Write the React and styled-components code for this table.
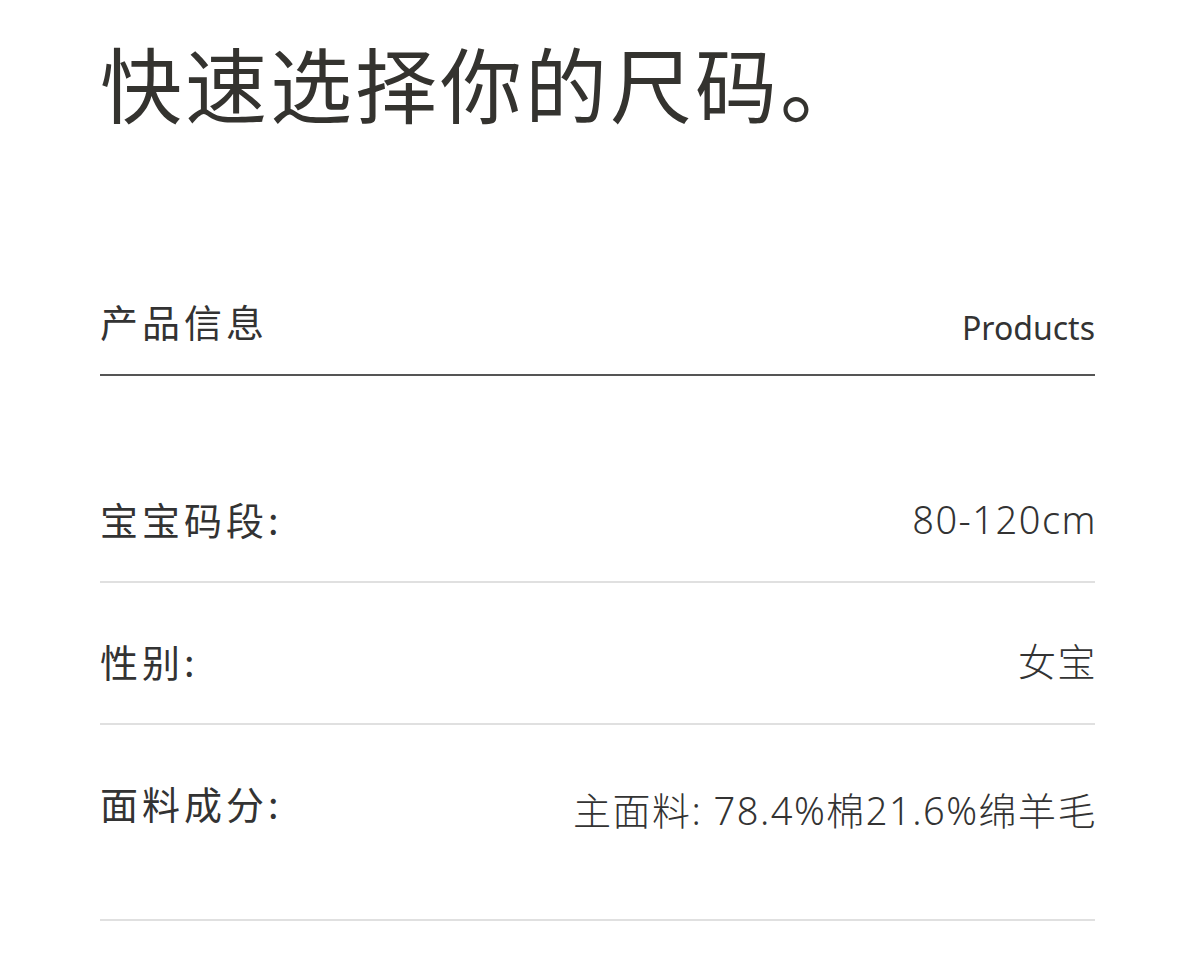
import React from 'react'
import styled, { createGlobalStyle } from 'styled-components'

const GlobalStyle = createGlobalStyle`
  body {
    margin: 0;
    background: #fff;
    font-family: "Noto Sans", "Noto Sans CJK SC", sans-serif;
    color: #333;
  }
`

const Page = styled.div`
  width: 995px;
  padding: 41px 0 0 100px;
`

const Title = styled.h1`
  margin: 0;
  font-family: "Noto Sans CJK SC", sans-serif;
  font-size: 82px;
  line-height: 1;
  font-weight: 400;
  letter-spacing: 3px;
  color: #34332f;
  white-space: nowrap;
`

const Header = styled.div`
  display: flex;
  justify-content: space-between;
  align-items: flex-end;
  margin-top: 179px;
  padding-bottom: 34px;
  border-bottom: 2px solid #555;
`

const HeaderTitle = styled.div`
  font-family: "Noto Sans CJK SC", sans-serif;
  font-size: 38px;
  line-height: 1;
  letter-spacing: 4px;
  color: #333;
`

const HeaderSub = styled.div`
  font-size: 32px;
  font-weight: 400;
  line-height: 1;
  color: #333;
  margin-bottom: -4px;
`

const List = styled.div`
  margin-top: 65px;
`

const Row = styled.div`
  display: flex;
  justify-content: space-between;
  align-items: flex-start;
  padding: 59px 0 ${p => p.$bottom || 43}px;
  border-bottom: 2px solid #e0e0e0;
`

const Label = styled.div`
  font-family: "Noto Sans CJK SC", sans-serif;
  font-size: 38px;
  line-height: 38px;
  letter-spacing: 4px;
  color: #333;
`

const Value = styled.div`
  font-family: "Noto Sans", "Noto Sans CJK SC", sans-serif;
  font-size: 38px;
  font-weight: 300;
  line-height: 38px;
  letter-spacing: 1.5px;
  margin-top: ${p => p.$shift || 0}px;
  margin-right: -2px;
  color: #333;
  white-space: nowrap;
`

const rows = [
  { label: '宝宝码段:', value: '80-120cm' },
  { label: '性别:', value: '女宝' },
  { label: '面料成分:', value: '主面料: 78.4%棉21.6%绵羊毛', bottom: 90, shift: 7 },
]

export default function App() {
  return (
    <Page>
      <GlobalStyle />
      <Title>快速选择你的尺码。</Title>
      <Header>
        <HeaderTitle>产品信息</HeaderTitle>
        <HeaderSub>Products</HeaderSub>
      </Header>
      <List>
        {rows.map(r => (
          <Row key={r.label} $bottom={r.bottom}>
            <Label>{r.label}</Label>
            <Value $shift={r.shift}>{r.value}</Value>
          </Row>
        ))}
      </List>
    </Page>
  )
}
